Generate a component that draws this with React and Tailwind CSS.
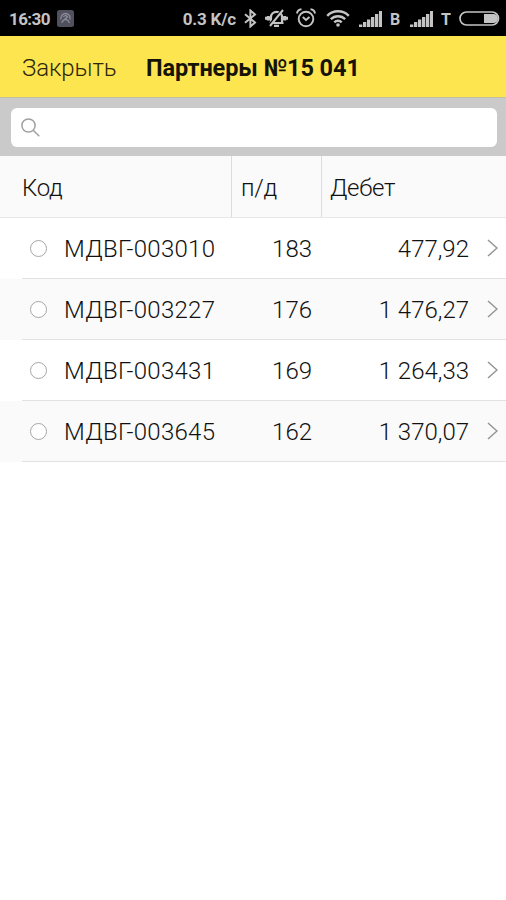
import React from 'react';

const partners = [
    { code: 'МДВГ-003010', days: '183', debit: '477,92' },
    { code: 'МДВГ-003227', days: '176', debit: '1 476,27' },
    { code: 'МДВГ-003431', days: '169', debit: '1 264,33' },
    { code: 'МДВГ-003645', days: '162', debit: '1 370,07' },
];

// =================================================================
// Status bar icons
// =================================================================
const AppIcon = () => (
    <svg className="ml-[7px] h-[17px] w-[17px] shrink-0" viewBox="0 0 17 17" fill="none">
        <rect width="17" height="17" rx="2.5" fill="#50505f" />
        <path d="M4 9.5V8a4.5 4.5 0 0 1 9 0v1.5M6 6.5l3-1 1.5 1.5L8 9l3 1.5 1.5 2.5M8 9l-3.5 3.5" stroke="#8c8c9b" strokeWidth="1.3" />
    </svg>
);

const BluetoothIcon = () => (
    <svg className="ml-2 h-[19px] w-[13px] shrink-0" viewBox="0 0 13 19" fill="none" stroke="#c4c4c4" strokeWidth="2">
        <path d="M1 5.2l10 8.3-4.6 4V1.5l4.6 4-10 8.3" />
    </svg>
);

const MuteIcon = () => (
    <svg className="ml-[8px] h-[19px] w-[23px] shrink-0" viewBox="0 0 23 19" fill="none" stroke="#c4c4c4">
        <path d="M6 13.500V8C6 5 8.500 2.800 11.500 2.800S17 5 17 8v5.500M4.500 14h14M9 16.800h5" strokeWidth="2.2" />
        <path d="M0 9.300h5.500M17.500 9.300H23M3.300 7v4.600M19.700 7v4.600" strokeWidth="3" />
        <path d="M16.300 1.500L4.500 15" stroke="#000" strokeWidth="1.800" />
        <path d="M18 1L5 17" strokeWidth="2" />
    </svg>
);

const AlarmIcon = () => (
    <svg className="ml-[8px] h-[20px] w-[20px] shrink-0" viewBox="0 0 20 20" fill="none" stroke="#c4c4c4" strokeWidth="1.9">
        <circle cx="10" cy="11" r="7.3" />
        <path d="M1 5.5C1.300 3.300 3 1.600 5.500 1.300M19 5.500C18.700 3.300 17 1.600 14.500 1.300M6.800 9L10 12l3.500-3" />
    </svg>
);

const WifiIcon = () => (
    <svg className="ml-[10px] h-[17px] w-[24px] shrink-0" viewBox="0 0 24 17" fill="none" stroke="#c4c4c4" strokeWidth="2.4">
        <path d="M1.200 5.800C7-.2 17-.2 22.800 5.800M4.800 9.200c4-4 10.400-4 14.400 0M8.300 12.300c2-2 5.400-2 7.400 0" />
        <circle cx="12" cy="15" r="1.8" fill="#c4c4c4" stroke="none" />
    </svg>
);

const SignalIcon = () => (
    <svg className="h-[16px] w-[23px] shrink-0" viewBox="0 0 23 16" fill="#c4c4c4">
        <path d="M0 13.500h3.300V16H0zM4 11h3.300v5H4zM8 8.500h3.300V16H8zM12 6h3.300v10h-3.300zM16 3h3.300v13h-3.300zM20 0h3v16h-3z" />
    </svg>
);

const BatteryIcon = () => (
    <svg className="h-[15px] w-[41px] shrink-0" viewBox="0 0 41 15" fill="none">
        <rect x="1" y="1" width="38.5" height="13" rx="6.5" stroke="#c4c4c4" strokeWidth="1.7" />
        <path d="M25 3h9.500a4.500 4.500 0 0 1 0 9H25z" fill="#c4c4c4" />
    </svg>
);

const StatusBar = () => (
    <div className="flex h-9 items-center bg-black pl-[9px] pr-[6px] text-[17px] font-bold text-[#c4c4c4]">
        <span className="w-[41px] whitespace-nowrap pt-0.5 tracking-[-0.6px]">16:30</span>
        <AppIcon />
        <span className="ml-auto whitespace-nowrap pt-0.5 tracking-[-0.2px]">0.3 K/c</span>
        <BluetoothIcon />
        <MuteIcon />
        <AlarmIcon />
        <WifiIcon />
        <div className="ml-[9px] flex items-center pt-0.5">
            <SignalIcon />
            <span className="ml-2 w-[12px] pt-0.5 text-[16px]">B</span>
        </div>
        <div className="ml-2 flex items-center pt-0.5">
            <SignalIcon />
            <span className="ml-2 w-[11px] pt-0.5 text-[16px]">T</span>
        </div>
        <div className="ml-[7px] flex">
            <BatteryIcon />
        </div>
    </div>
);

// =================================================================
// PartnerRow Component
// =================================================================
const PartnerRow = ({ partner }) => (
    <div className="h-[61px] pl-[22px] odd:bg-white even:bg-[#fafafa]">
        <div className="flex h-full items-center border-b border-[#e2e2e2]">
            <span className="ml-[8px] h-[17px] w-[17px] rounded-full border-[1.5px] border-[#a6a6a6] bg-white" />
            <span className="ml-[17px] w-[168px] whitespace-nowrap pt-[2px] tracking-[0.27px]">{partner.code}</span>
            <span className="w-[80px] pt-[2px] text-right">{partner.days}</span>
            <span className="w-[157px] whitespace-nowrap pt-[2px] text-right">{partner.debit}</span>
            <svg className="ml-[18px] h-[18px] w-[11px]" viewBox="0 0 11 18" fill="none" stroke="#949494" strokeWidth="1.5">
                <path d="M1 1l9 8-9 8" />
            </svg>
        </div>
    </div>
);

const App = () => {
    return (
        <div className="h-[900px] w-[506px] overflow-hidden bg-white font-['Roboto',sans-serif] text-[24px] font-light leading-none text-[#111111]">
            <StatusBar />
            <div className="flex h-[61px] items-center bg-[#fde54f] pt-[3px]">
                <button className="ml-[22px] w-[124px] text-left tracking-[-0.1px] text-[#2c280c]">Закрыть</button>
                <h1 className="whitespace-nowrap pt-px text-[23.5px] font-bold tracking-[-0.1px] text-[#151306]">Партнеры №15 041</h1>
            </div>
            <div className="h-[59px] border-t border-[#c2bfa5] bg-[#cacaca] pl-[11px] pr-[9px] pt-[10px]">
                <div className="flex h-[39px] items-center rounded-md bg-white pl-[10px]">
                    <svg className="h-[19px] w-[19px]" viewBox="0 0 19 19" fill="none" stroke="#a0a0a0" strokeWidth="1.5">
                        <circle cx="7.5" cy="7.5" r="6.6" />
                        <path d="M12.2 12.2l6.1 6.1" />
                    </svg>
                </div>
            </div>
            <div className="flex h-[62px] items-stretch border-b border-[#e8e8e8] bg-[#fafafa] tracking-[-0.3px]">
                <div className="flex w-[232px] items-center border-r border-[#dcdcdc] pl-[22px] pt-[3px]">Код</div>
                <div className="flex w-[90px] items-center border-r border-[#dcdcdc] pl-[9px] pt-[3px]">п/д</div>
                <div className="flex flex-1 items-center pl-[8px] pt-[3px]">Дебет</div>
            </div>
            <div>
                {partners.map((partner) => (
                    <PartnerRow key={partner.code} partner={partner} />
                ))}
            </div>
        </div>
    );
};

export default App;
